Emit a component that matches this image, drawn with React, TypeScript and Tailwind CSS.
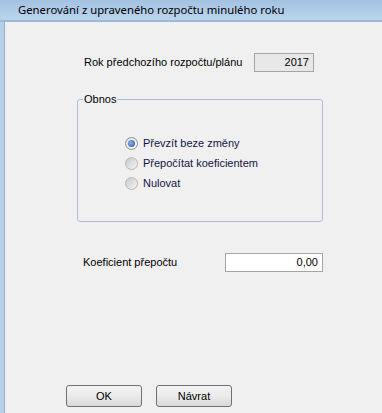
import React from "react";

const font = { fontFamily: '"Liberation Sans", Arial, sans-serif' };

const Radio: React.FC<{ checked?: boolean; label: string }> = ({ checked, label }) => (
  <div className="flex items-center h-[20px]">
    <span
      className={
        checked
          ? "w-[13px] h-[13px] rounded-full border border-[#8e8f8f] bg-gradient-to-br from-[#dcdcdc] to-[#ffffff] flex items-center justify-center"
          : "w-[13px] h-[13px] rounded-full border border-[#b8b8b8] bg-gradient-to-br from-[#c9c9c9] to-[#f4f4f4]"
      }
    >
      {checked && (
        <span className="w-[7px] h-[7px] rounded-full bg-[radial-gradient(circle_at_40%_40%,#8fb2e6,#1f4fa8)]" />
      )}
    </span>
    <span className="ml-[5px] text-[11px] text-[#141446] whitespace-nowrap">{label}</span>
  </div>
);

const Btn: React.FC<{ children: React.ReactNode }> = ({ children }) => (
  <button className="w-[76px] h-[22px] rounded-[3px] border border-[#707070] bg-gradient-to-b from-[#f2f2f2] via-[#ebebeb] to-[#d9d9d9] text-[11px] text-black">
    {children}
  </button>
);

export default function App() {
  return (
    <div className="w-[382px] h-[413px] flex flex-col overflow-hidden" style={font}>
      {/* title bar */}
      <div className="h-[20px] bg-gradient-to-b from-[#a4c1e2] to-[#bcd5ee] flex items-center pl-[18px]">
        <span className="text-[11.3px] text-black whitespace-nowrap" style={{ fontFamily: '"Noto Sans", sans-serif' }}>
          Generování z upraveného rozpočtu minulého roku
        </span>
      </div>
      <div className="h-[2px] bg-[#9db8d8]" />
      <div className="flex flex-1">
        <div className="w-[5px] bg-[#b7cfe9] border-r border-[#97b3d4]" />
        <div className="flex-1 bg-[#f0f0f0] pt-[31px] text-black">
          {/* rok */}
          <div className="flex items-center ml-[79px]">
            <span className="w-[170px] text-[11px] whitespace-nowrap">Rok předchozího rozpočtu/plánu</span>
            <div className="w-[60px] h-[19px] border border-[#a5a5a5] bg-[#e8e8e8] text-[11px] text-right pr-[4px] leading-[17px]">
              2017
            </div>
          </div>

          {/* obnos */}
          <fieldset className="ml-[72px] mt-[20px] w-[246px] h-[130px] border border-[#aebdcf] rounded-[3px]">
            <legend className="ml-[5px] px-[1px] text-[11px] leading-[14px]">Obnos</legend>
            <div className="pl-[47px] pt-[27px]">
              <Radio checked label="Převzít beze změny" />
              <Radio label="Přepočítat koeficientem" />
              <Radio label="Nulovat" />
            </div>
          </fieldset>

          {/* koeficient */}
          <div className="flex items-center ml-[78px] mt-[31px]">
            <span className="w-[142px] text-[11px] whitespace-nowrap">Koeficient přepočtu</span>
            <div className="w-[98px] h-[19px] border border-[#a5a5a5] bg-white text-[11px] text-right pr-[4px] leading-[17px]">
              0,00
            </div>
          </div>

          {/* buttons */}
          <div className="flex gap-[14px] ml-[61px] mt-[113px]">
            <Btn>OK</Btn>
            <Btn>Návrat</Btn>
          </div>
        </div>
      </div>
    </div>
  );
}
